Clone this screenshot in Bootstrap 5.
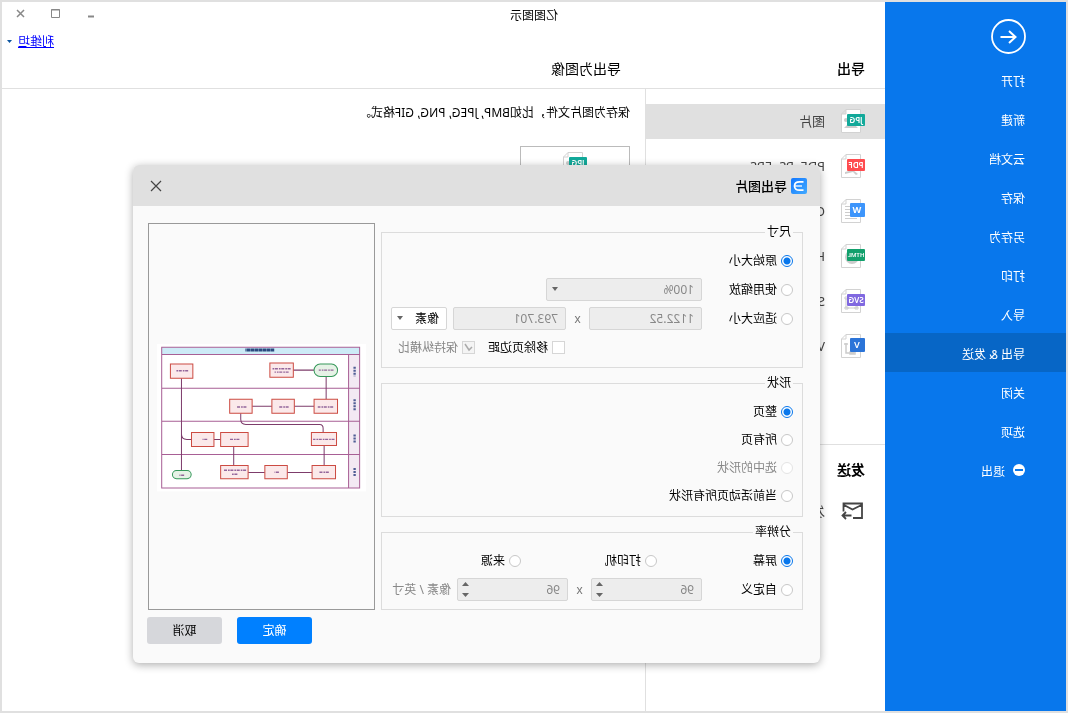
<!DOCTYPE html>
<html lang="zh-CN">
<head>
<meta charset="utf-8">
<meta name="viewport" content="width=device-width, initial-scale=1">
<title>亿图图示</title>
<link href="https://cdn.jsdelivr.net/npm/bootstrap@5.3.0/dist/css/bootstrap.min.css" rel="stylesheet">
<style>
  body { font: 12px/16px "Noto Sans", "Noto Sans CJK SC", sans-serif; font-kerning: none; color: #000; background: #fff; }
  /* the window is laid out left to right and shown mirrored */
  .app-window { transform: scaleX(-1); border: 2px solid #e0e0e0; }
  button { font: inherit; color: inherit; }
  svg { display: block; }

  .side-menu { width: 181px; background: #0877ec; }
  .side-menu a { height: 39px; padding: 4px 0 0 41px; color: #fff; text-decoration: none; }
  .side-menu a.active { background: #0766c6; }
  .back-btn { margin: 17px 0 6px 40px; }

  .title-bar { height: 27px; }
  .title-tools { width: 181px; gap: 26px; padding: 0 14px 4px 0; }
  .title-tools button, .close-btn { padding: 0; border: 0; background: none; }
  .account-row { height: 24px; gap: 6px; padding: 1px 5px 0 0; }
  .account-row a { color: #00f; }
  .heading-row { height: 36px; padding-bottom: 4px; font-size: 14px; border-bottom: 1px solid #e0e0e0; }
  .heading-list { width: 264px; padding-left: 20px; font-weight: 500; }

  .format-list { width: 240px; border-right: 1px solid #e0e0e0; padding-top: 15px; }
  .format-list a { height: 35px; margin-bottom: 10px; padding: 0 0 1px 20px; gap: 16px; font-size: 13px; color: #444; text-decoration: none; white-space: nowrap; }
  .format-list a.active { background: #e0e0e0; }
  .send-part { margin-top: 80px; border-top: 1px solid #e0e0e0; padding-top: 16px; }
  .send-part h2 { margin: 0 0 15px 20px; font-size: 14px; line-height: 18px; font-weight: 700; }
  .format-pane { padding: 16px 15px; }
  .format-tile { width: 110px; height: 100px; margin-top: 25px; padding-top: 5px; border: 1px solid #bbb; background: #fff; }

  .export-dialog { position: absolute; left: 65px; top: 163px; width: 687px; border-radius: 6px; background: #fafafa; box-shadow: 0 2px 8px rgba(0,0,0,.32); }
  .dialog-head { height: 41px; padding: 0 17px 0 13px; background: #e0e0e0; border-radius: 6px 6px 0 0; font-size: 13px; font-weight: 500; }
  .dialog-main { padding: 17px 14px 19px 17px; gap: 7px; }
  .option-col { width: 422px; padding-top: 1px; gap: 7px; }
  fieldset.option-group { border: 1px solid #dcdcdc; padding: 0 9px 8px; }
  .option-group legend { font-size: 12px; line-height: 15px; padding: 0 2px 2px; margin: 0 0 8px; }
  .option-rows { gap: 5px; padding-bottom: 1px; }
  .option-rows.spaced { gap: 6px; padding-bottom: 0; }
  .option-line { height: 23px; }
  .first-col { width: 91px; }
  .third-col { width: 136px; }
  .choice { gap: 4px; white-space: nowrap; }
  .choice input { appearance: none; flex: none; width: 12px; height: 12px; margin: 0; background: #fff; border: 1px solid #c8c8c8; }
  .choice input[type=radio] { border-radius: 50%; }
  .choice input[type=radio]:checked { border-color: #0877ec; background: radial-gradient(circle, #0877ec 0 3px, #fff 4px); }
  .choice input[type=checkbox] { width: 13px; height: 13px; border-color: #d6d6d6; }
  .choice input[type=checkbox]:checked { background: #f4f4f4 url("data:image/svg+xml,%3Csvg xmlns='http://www.w3.org/2000/svg' viewBox='0 0 11 11'%3E%3Cpath d='M2 5l3 3 4-6' fill='none' stroke='%23aaa' stroke-width='1.5'/%3E%3C/svg%3E"); }
  .choice.off { color: #888; }
  .choice.off input[type=radio] { border-color: #e4e4e4; }
  .before-checks { width: 228px; }
  .check-col { width: 90px; }

  .field-box { position: relative; height: 23px; }
  .field-box input, .field-box select { appearance: none; width: 100%; height: 23px; padding: 0 7px; border: 1px solid #d6d6d6; border-radius: 2px; background: #fff; color: #000; font: inherit; line-height: 21px; opacity: 1; }
  .field-box :disabled { background: #ededed; color: #888; }
  .field-box.menu-field::after { content: ""; position: absolute; right: 6px; top: 9px; border: 3px solid transparent; border-top: 4px solid #666; border-bottom: 0; pointer-events: none; }
  .w-scale { width: 156px; }
  .w-size { width: 113px; }
  .w-unit { width: 56px; margin-left: 6px; }
  .w-dpi { width: 111px; }
  .spin-keys { position: absolute; right: 5px; top: 3px; display: flex; flex-direction: column; gap: 5px; }
  .spin-keys button { width: 7px; height: 6px; padding: 0; border: 0; background: none; }
  .times-sign { width: 23px; text-align: center; color: #777; }
  .unit-text { margin-left: 6px; color: #888; }

  .preview-box { width: 227px; margin-right: 1px; border: 1px solid #999; padding: 3px 8px 0; }
  .preview-box svg { width: 100%; height: auto; }
  .dialog-foot { gap: 15px; }
  .dialog-foot button { width: 75px; height: 27px; padding: 0; border: 0; border-radius: 3px; font-size: 12px; line-height: 27px; }
  .ok-btn, .ok-btn:hover { background: #0080ff; color: #fff; }
  .cancel-btn, .cancel-btn:hover { background: #d6d7db; color: #000; }
</style>
</head>
<body>
<svg width="0" height="0" class="position-absolute" aria-hidden="true">
  <defs>
    <g id="sheet"><path d="M4.500.500h14.500l4.500 4.500v18.500h-19zM19 .500v4.500h4.500" fill="#fff" stroke="#d2d2d2"/></g>
    <g id="jpg-file" font-family="Noto Sans" font-size="8" font-weight="600" fill="#fff" text-anchor="middle">
      <use href="#sheet"/><path d="M7 19l5-5 3 3 2-2 4 4z" fill="#ccc"/><circle cx="19" cy="11" r="2" fill="#ccc"/><rect y="5" width="18" height="12" rx="1" fill="#12a99a"/><text x="9" y="14">JPG</text>
    </g>
  </defs>
</svg>

<div class="app-window d-flex min-vh-100">
  <nav class="side-menu flex-shrink-0 d-flex flex-column">
    <button class="back-btn btn p-0 border-0 align-self-start" aria-label="返回">
      <svg width="35" height="35" viewBox="0 0 35 35" fill="none" stroke="#fff" stroke-width="2"><circle cx="17.500" cy="17.500" r="16.500" stroke-width="1.800"/><path d="M25.500 18h-15M17 12l-6.500 6 6.500 6"/></svg>
    </button>
    <a href="#" class="d-flex align-items-center">打开</a>
    <a href="#" class="d-flex align-items-center">新建</a>
    <a href="#" class="d-flex align-items-center">云文档</a>
    <a href="#" class="d-flex align-items-center">保存</a>
    <a href="#" class="d-flex align-items-center">另存为</a>
    <a href="#" class="d-flex align-items-center">打印</a>
    <a href="#" class="d-flex align-items-center">导入</a>
    <a href="#" class="d-flex align-items-center active">导出 &amp; 发送</a>
    <a href="#" class="d-flex align-items-center">关闭</a>
    <a href="#" class="d-flex align-items-center">选项</a>
    <a href="#" class="d-flex align-items-center"><svg class="me-2 mb-1" width="12" height="12"><circle cx="6" cy="6" r="6" fill="#fff"/><path d="M2 6h8" stroke="#0877ec" stroke-width="2"/></svg>退出</a>
  </nav>

  <div class="flex-fill d-flex flex-column position-relative">
    <header>
      <div class="title-bar d-flex align-items-center">
        <div class="flex-fill text-center">亿图图示</div>
        <div class="title-tools d-flex justify-content-end align-items-center">
          <button aria-label="最小化"><svg width="9" height="10"><path d="M1 7.500h6" stroke="#888" stroke-width="2"/></svg></button>
          <button aria-label="最大化"><svg width="9" height="9"><path d="M.500.500h8v8h-8zM0 1h9" fill="none" stroke="#888"/></svg></button>
          <button aria-label="关闭窗口"><svg width="9" height="9"><path d="M1 1l7 7M8 1l-7 7" stroke="#888" stroke-width="1.500"/></svg></button>
        </div>
      </div>
      <div class="account-row d-flex justify-content-end align-items-center">
        <a href="#">利维坦</a>
        <svg width="5" height="3"><path d="M0 0h5L2.500 3z" fill="#0b55a0"/></svg>
      </div>
      <div class="heading-row d-flex align-items-center">
        <div class="heading-list">导出</div>
        <div>导出为图像</div>
      </div>
    </header>

    <div class="flex-fill d-flex">
      <nav class="format-list flex-shrink-0">
        <a href="#" class="d-flex align-items-center active"><svg width="24" height="24"><use href="#jpg-file"/></svg>图片</a>
        <a href="#" class="d-flex align-items-center"><svg width="24" height="24" font-family="Noto Sans" font-size="8" font-weight="600" fill="#fff" text-anchor="middle"><use href="#sheet"/><path d="M7 20l5-4 8 2v2l-8-2-3 3z" fill="#ccc"/><rect y="5" width="18" height="12" rx="1" fill="#ff4b4f"/><text x="9" y="14">PDF</text></svg>PDF, PS, EPS</a>
        <a href="#" class="d-flex align-items-center"><svg width="24" height="24" font-family="Noto Sans" font-size="9" font-weight="700" fill="#fff" text-anchor="middle"><use href="#sheet"/><path d="M8 7.500h12M8 10.500h12M8 13.500h12M8 16.500h12M8 19.500h12" stroke="#ccc"/><rect y="4" width="15" height="14" rx="1" fill="#3d95fb"/><text x="8" y="14">W</text></svg>Office</a>
        <a href="#" class="d-flex align-items-center"><svg width="24" height="24" font-family="Noto Sans" font-weight="600" fill="#fff" text-anchor="middle"><use href="#sheet"/><circle cx="13" cy="13" r="7" fill="#ccc"/><rect y="5" width="18" height="12" rx="1" fill="#12a06c"/><text x="9" y="13" font-size="6">HTML</text></svg>Html</a>
        <a href="#" class="d-flex align-items-center"><svg width="24" height="24" font-family="Noto Sans" font-size="8" font-weight="600" fill="#fff" text-anchor="middle"><use href="#sheet"/><path d="M8 9v10h11V9M7 18h3v2H7zM17 18h3v2h-3zM17 8h3v2h-3z" fill="none" stroke="#ccc"/><rect y="5" width="18" height="12" rx="1" fill="#8068e0"/><text x="9" y="14">SVG</text></svg>SVG</a>
        <a href="#" class="d-flex align-items-center"><svg width="24" height="24" font-family="Noto Sans" font-size="9" font-weight="600" fill="#fff" text-anchor="middle"><use href="#sheet"/><path d="M19 9v10h-8M17 10h4M10 18h5v2h-5z" fill="none" stroke="#ccc" stroke-width="1.500"/><rect y="4" width="15" height="14" rx="1" fill="#2b74d8"/><text x="8" y="14">V</text></svg>Visio</a>
        <div class="send-part">
          <h2>发送</h2>
          <a href="#" class="d-flex align-items-center"><svg width="24" height="20" viewBox="0 0 24 20" fill="none" stroke="#444" stroke-width="1.800"><path d="M12 17H3V2.500h18.500v8M3.500 4l9 4.500 8.500-4.500M13.500 14.500h8.500M19 11l3.500 3.500L19 18"/></svg>发送电子邮件</a>
        </div>
      </nav>
      <main class="format-pane flex-fill">
        <div>保存为图片文件，比如BMP, JPEG, PNG, GIF格式。</div>
        <button class="format-tile d-flex justify-content-center align-items-start" aria-label="JPG"><svg width="24" height="24"><use href="#jpg-file"/></svg></button>
      </main>
    </div>

    <form class="export-dialog" role="dialog" aria-labelledby="dlg-title" onsubmit="return false">
      <div class="dialog-head d-flex align-items-center">
        <svg class="me-1" width="16" height="16"><defs><linearGradient id="lg" x1="1" x2="0" y2="1"><stop stop-color="#1378ff"/><stop offset="1" stop-color="#42aaff"/></linearGradient></defs><rect width="16" height="16" rx="2" fill="url(#lg)"/><path d="M3.500 3.800h4q5 0 5 4.200t-5 4.200h-4" fill="none" stroke="#fff" stroke-width="1.700"/><path d="M5 8h7" stroke="#fff" stroke-width="1.300"/></svg>
        <span id="dlg-title" class="flex-fill">导出图片</span>
        <button type="button" class="close-btn" aria-label="关闭"><svg width="12" height="12"><path d="M1 1l10 10M11 1L1 11" stroke="#444" stroke-width="1.200"/></svg></button>
      </div>
      <div class="dialog-main d-flex flex-column">
        <div class="d-flex justify-content-between">
          <div class="option-col d-flex flex-column">
            <fieldset class="option-group">
              <legend class="float-none w-auto">尺寸</legend>
              <div class="option-rows spaced d-flex flex-column">
                <div class="option-line d-flex align-items-center"><label class="choice d-flex align-items-center"><input type="radio" name="size" checked>原始大小</label></div>
                <div class="option-line d-flex align-items-center">
                  <label class="choice first-col d-flex align-items-center"><input type="radio" name="size">使用缩放</label>
                  <div class="field-box menu-field w-scale"><select aria-label="缩放" disabled><option>100%</option></select></div>
                </div>
                <div class="option-line d-flex align-items-center">
                  <label class="choice first-col d-flex align-items-center"><input type="radio" name="size">适应大小</label>
                  <div class="field-box w-size"><input type="text" value="1122.52" aria-label="宽度" disabled></div>
                  <span class="times-sign">x</span>
                  <div class="field-box w-size"><input type="text" value="793.701" aria-label="高度" disabled></div>
                  <div class="field-box menu-field w-unit"><select aria-label="单位"><option>像素</option></select></div>
                </div>
                <div class="option-line d-flex align-items-center">
                  <span class="before-checks"></span>
                  <label class="choice check-col d-flex align-items-center"><input type="checkbox">移除页边距</label>
                  <label class="choice off d-flex align-items-center"><input type="checkbox" checked disabled>保持纵横比</label>
                </div>
              </div>
            </fieldset>
            <fieldset class="option-group">
              <legend class="float-none w-auto">形状</legend>
              <div class="option-rows d-flex flex-column">
                <div class="option-line d-flex align-items-center"><label class="choice d-flex align-items-center"><input type="radio" name="shape" checked>整页</label></div>
                <div class="option-line d-flex align-items-center"><label class="choice d-flex align-items-center"><input type="radio" name="shape">所有页</label></div>
                <div class="option-line d-flex align-items-center"><label class="choice off d-flex align-items-center"><input type="radio" name="shape" disabled>选中的形状</label></div>
                <div class="option-line d-flex align-items-center"><label class="choice d-flex align-items-center"><input type="radio" name="shape">当前活动页所有形状</label></div>
              </div>
            </fieldset>
            <fieldset class="option-group">
              <legend class="float-none w-auto">分辨率</legend>
              <div class="option-rows spaced d-flex flex-column">
                <div class="option-line d-flex align-items-center">
                  <label class="choice third-col d-flex align-items-center"><input type="radio" name="dpi" checked>屏幕</label>
                  <label class="choice third-col d-flex align-items-center"><input type="radio" name="dpi">打印机</label>
                  <label class="choice d-flex align-items-center"><input type="radio" name="dpi">来源</label>
                </div>
                <div class="option-line d-flex align-items-center">
                  <label class="choice first-col d-flex align-items-center"><input type="radio" name="dpi">自定义</label>
                  <div class="field-box w-dpi"><input type="text" value="96" aria-label="水平分辨率" disabled>
                    <span class="spin-keys"><button type="button" aria-label="增加" disabled><svg width="7" height="6"><path d="M0 5h7L3.500 1z" fill="#666"/></svg></button><button type="button" aria-label="减少" disabled><svg width="7" height="6"><path d="M0 1h7L3.500 5z" fill="#666"/></svg></button></span></div>
                  <span class="times-sign">x</span>
                  <div class="field-box w-dpi"><input type="text" value="96" aria-label="垂直分辨率" disabled>
                    <span class="spin-keys"><button type="button" aria-label="增加" disabled><svg width="7" height="6"><path d="M0 5h7L3.500 1z" fill="#666"/></svg></button><button type="button" aria-label="减少" disabled><svg width="7" height="6"><path d="M0 1h7L3.500 5z" fill="#666"/></svg></button></span></div>
                  <span class="unit-text">像素 / 英寸</span>
                </div>
              </div>
            </fieldset>
          </div>
          <div class="preview-box d-flex align-items-center">
            <svg viewBox="0 0 624 440" role="img" aria-label="流程图预览">
              <rect width="624" height="440" fill="#fff"/>
              <rect x="19" y="10" width="591" height="21" fill="#cdebf7"/>
              <rect x="19" y="31" width="33" height="399" fill="#f3e9f3"/>
              <path d="M19 10h591v420H19zM19 31h591M52 31v399M19 132h591M19 231h591M19 330h591" fill="none" stroke="#a85f95" stroke-width="3"/>
              <path d="M155 78h62M119 97v68M155 186h59M281 186h59M374 207v18q0 15-15 15H138q-10 0-10 12v12M125 303v60M161 384h74M302 384h50M395 363v-57M434 285h20M521 285h14q16 0 16-16M551 102v276" fill="none" stroke="#7d3c6b" stroke-width="3"/>
              <g fill="#fbe9ea" stroke="#cc4b42" stroke-width="3">
                <path d="M517 60h67v42h-67zM217 57h70v42h-70zM85 165h70v42H85zM214 165h67v42h-67zM340 165h67v42h-67zM454 264h67v42h-67zM352 264h82v42h-82zM88 264h75v39H88zM352 363h82v39h-82zM235 363h67v39h-67zM91 363h70v39H91z"/>
                <g fill="#e6f2e6" stroke="#36985a"><rect x="85" y="60" width="70" height="37" rx="18"/><rect x="522" y="378" width="56" height="24" rx="12"/></g>
              </g>
              <path d="M274 18h86" stroke="#2b4a80" stroke-width="9" stroke-dasharray="11 1"/>
              <path d="M34 68v28M34 165v36M34 270v26M34 370v26" stroke="#4f5d95" stroke-width="7" stroke-dasharray="6 3"/>
              <path d="M97 78h44M531 80h38M225 74h54M231 84h42M98 188h46M231 188h28M357 188h30M474 285h14M378 285h28M94 285h64M358 377h66M384 389h16M260 383h13M111 383h29M543 392h14" stroke="#93659a" stroke-width="4" stroke-dasharray="9 2 5 3"/>
            </svg>
          </div>
        </div>
        <div class="dialog-foot d-flex justify-content-end">
          <button type="submit" class="btn ok-btn">确定</button>
          <button type="button" class="btn cancel-btn">取消</button>
        </div>
      </div>
    </form>
  </div>
</div>
<script src="https://cdn.jsdelivr.net/npm/bootstrap@5.3.0/dist/js/bootstrap.bundle.min.js"></script>
</body>
</html>
